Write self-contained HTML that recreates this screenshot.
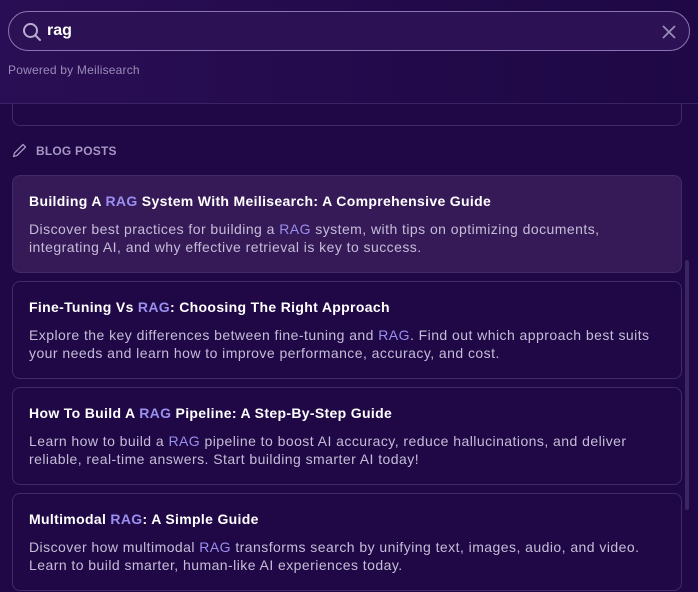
<!DOCTYPE html>
<html><head><style>
*{box-sizing:border-box;margin:0;padding:0}
body{width:698px;height:592px;overflow:hidden;background:#1f0845;font-family:"Liberation Sans",sans-serif;position:relative}
.top{position:absolute;left:0;top:0;width:698px;height:104px;background:linear-gradient(90deg,#2a0e55,#220a4a 60%,#1f0845);border-bottom:1px solid #3a2468;z-index:2}
.search{position:absolute;left:8px;top:11px;width:682px;height:40px;border:1px solid #8a74b4;border-radius:20px;background:#2c1254}
.search .q{position:absolute;left:38px;top:10px;color:#fff;font-size:16px;font-weight:bold}
.pw{position:absolute;left:8px;top:63px;font-size:12px;color:#9a8cb8;letter-spacing:0.2px}
.card{position:absolute;left:12px;width:670px;height:98px;border:1px solid #3f2a6c;border-radius:8px;background:#1f0845}
.card.a{background:#361a58}
.card h3{position:absolute;left:16px;top:17px;font-size:14px;color:#fff;font-weight:bold;white-space:nowrap;letter-spacing:0.33px}
.card p{position:absolute;left:16px;top:44px;font-size:14px;line-height:18px;color:#c5bcd8;width:640px;letter-spacing:0.45px}
.r{color:#9a8ff0}
.lbl{position:absolute;left:36px;top:144px;font-size:12px;font-weight:bold;color:#a596c4;letter-spacing:0.2px}
.sb{position:absolute;left:685px;top:260px;width:4px;height:250px;background:#3a2660;border-radius:2px}
</style></head><body>
<div class="top">
<div class="search">
<svg style="position:absolute;left:13px;top:10px" width="20" height="20" viewBox="0 0 20 20"><circle cx="8.5" cy="8.5" r="6.5" fill="none" stroke="#b8acd0" stroke-width="2"/><line x1="13.5" y1="13.5" x2="18" y2="18" stroke="#b8acd0" stroke-width="2" stroke-linecap="round"/></svg>
<span class="q">rag</span>
<svg style="position:absolute;left:652px;top:12px" width="16" height="16" viewBox="0 0 16 16"><path d="M2 2L14 14M14 2L2 14" stroke="#9a8cb8" stroke-width="1.8"/></svg>
</div>
<div class="pw">Powered by Meilisearch</div>
</div>
<div style="position:absolute;left:12px;top:100px;width:670px;height:26px;border:1px solid #3f2a6c;border-top:none;border-radius:0 0 8px 8px"></div>
<svg style="position:absolute;left:12px;top:143px" width="15" height="15" viewBox="0 0 15 15"><path d="M1.5 13.5L2.5 10L11 1.5L13.5 4L5 12.5Z" fill="none" stroke="#a596c4" stroke-width="1.3" stroke-linejoin="round"/></svg>
<div class="lbl">BLOG POSTS</div>
<div class="card a" style="top:175px"><h3>Building A <span class="r">RAG</span> System With Meilisearch: A Comprehensive Guide</h3><p>Discover best practices for building a <span class="r">RAG</span> system, with tips on optimizing documents, integrating AI, and why effective retrieval is key to success.</p></div>
<div class="card" style="top:281px"><h3>Fine-Tuning Vs <span class="r">RAG</span>: Choosing The Right Approach</h3><p>Explore the key differences between fine-tuning and <span class="r">RAG</span>. Find out which approach best suits your needs and learn how to improve performance, accuracy, and cost.</p></div>
<div class="card" style="top:387px"><h3>How To Build A <span class="r">RAG</span> Pipeline: A Step-By-Step Guide</h3><p>Learn how to build a <span class="r">RAG</span> pipeline to boost AI accuracy, reduce hallucinations, and deliver reliable, real-time answers. Start building smarter AI today!</p></div>
<div class="card" style="top:493px"><h3>Multimodal <span class="r">RAG</span>: A Simple Guide</h3><p>Discover how multimodal <span class="r">RAG</span> transforms search by unifying text, images, audio, and video. Learn to build smarter, human-like AI experiences today.</p></div>
<div class="sb"></div>
</body></html>
